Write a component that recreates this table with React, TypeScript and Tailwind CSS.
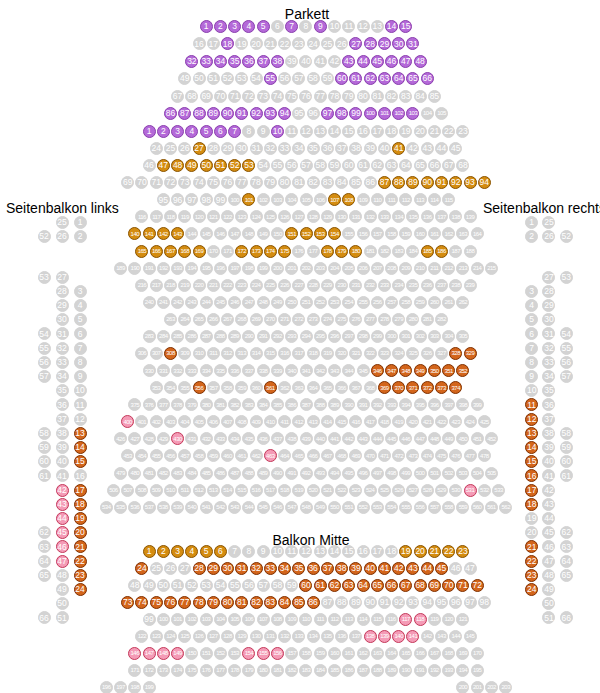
import clsx from 'clsx'

type Kind = 'free' | 'purple' | 'gold' | 'orange' | 'pink'

const seatColor: Record<Kind, string> = {
  free: 'bg-[#d3d3d3] border-[#d3d3d3]',
  purple: 'bg-[#b469d8] border-[#8a3fae]',
  gold: 'bg-[#d48c10] border-[#8a5400]',
  orange: 'bg-[#d3651b] border-[#803000]',
  pink: 'bg-[#f49bb6] border-[#c4395a]',
}

const range = (a: number, b: number) =>
  Array.from({ length: b - a + 1 }, (_, i) => a + i)

type Row = { from: number; count: number; kind?: Kind; taken?: number[] }

// Parkett, upper part (numbering 1–105)
const parkettTop: Row[] = [
  { from: 1, count: 15, kind: 'purple', taken: [1, 2, 3, 4, 5, 7, 9, 14, 15] },
  { from: 16, count: 16, kind: 'purple', taken: [18, ...range(27, 31)] },
  { from: 32, count: 17, kind: 'purple', taken: [...range(32, 38), ...range(43, 48)] },
  { from: 49, count: 18, kind: 'purple', taken: [55, ...range(60, 66)] },
  { from: 67, count: 19 },
  { from: 86, count: 20, kind: 'purple', taken: [...range(86, 94), ...range(97, 103)] },
]

// Parkett, lower part (numbering restarts at 1)
const parkett: Row[] = [
  { from: 1, count: 23, kind: 'purple', taken: [...range(1, 7), 10] },
  { from: 24, count: 22, kind: 'gold', taken: [27, 41] },
  { from: 46, count: 23, kind: 'gold', taken: range(47, 53) },
  { from: 69, count: 26, kind: 'gold', taken: range(87, 94) },
  { from: 95, count: 21, kind: 'gold', taken: [101, 107, 108] },
  { from: 116, count: 24 },
  { from: 140, count: 25, kind: 'gold', taken: [...range(140, 143), ...range(151, 154)] },
  {
    from: 165, count: 24, kind: 'gold',
    taken: [...range(165, 169), ...range(172, 175), ...range(178, 180), 185, 186],
  },
  { from: 189, count: 27 },
  { from: 216, count: 24 },
  { from: 240, count: 23 },
  { from: 263, count: 20 },
  { from: 283, count: 23 },
  { from: 306, count: 24, kind: 'orange', taken: [308, 328, 329] },
  { from: 330, count: 23, kind: 'orange', taken: range(346, 352) },
  { from: 353, count: 22, kind: 'orange', taken: [356, 361, ...range(369, 374)] },
  { from: 375, count: 25 },
  { from: 400, count: 26, kind: 'pink', taken: [400] },
  { from: 426, count: 27, kind: 'pink', taken: [430] },
  { from: 453, count: 26, kind: 'pink', taken: [463] },
  { from: 479, count: 27 },
  { from: 506, count: 28, kind: 'pink', taken: [531] },
  { from: 534, count: 29 },
]

const balkonMitte: Row[] = [
  { from: 1, count: 23, kind: 'gold', taken: [...range(1, 6), ...range(19, 23)] },
  { from: 24, count: 24, kind: 'orange', taken: [24, ...range(28, 45)] },
  { from: 48, count: 25, kind: 'orange', taken: range(60, 72) },
  { from: 73, count: 26, kind: 'orange', taken: range(73, 86) },
  { from: 99, count: 23, kind: 'pink', taken: [117, 118] },
  { from: 122, count: 24, kind: 'pink', taken: range(138, 141) },
  { from: 146, count: 25, kind: 'pink', taken: [...range(146, 149), ...range(154, 156)] },
  { from: 171, count: 25 },
]

// side balconies: [outer, middle, inner], 0 = no seat, suffix o / p = booked
type Cell = number | string
type SideRow = [Cell, Cell, Cell]

const sideTop: SideRow[] = [
  [0, 25, 1],
  [52, 26, 2],
]
const leftRows: SideRow[] = [
  [53, 27, 0],
  [0, 28, 3],
  [0, 29, 4],
  [0, 30, 5],
  [54, 31, 6],
  [55, 32, 7],
  [56, 33, 8],
  [57, 34, 9],
  [0, 35, 10],
  [0, 36, 11],
  [0, 37, 12],
  [58, 38, '13o'],
  [59, 39, '14o'],
  [60, 40, '15o'],
  [61, 41, 16],
  [0, '42p', '17o'],
  [0, '43p', '18o'],
  [0, '44p', '19o'],
  [62, '45p', '20o'],
  [63, '46p', '21o'],
  [64, '47p', '22o'],
  [65, 48, '23o'],
  [0, 49, '24o'],
  [0, 50, 0],
  [66, 51, 0],
]

const rightRows: SideRow[] = [
  [53, 27, 0],
  [0, 28, 3],
  [0, 29, 4],
  [0, 30, 5],
  [54, 31, 6],
  [55, 32, 7],
  [56, 33, 8],
  [57, 34, 9],
  [0, 35, 10],
  [0, 36, '11o'],
  [0, 37, '12o'],
  [58, 38, '13o'],
  [59, 39, '14o'],
  [60, 40, '15o'],
  [61, 41, '16o'],
  [0, 42, '17o'],
  [0, 43, '18o'],
  [0, 44, 19],
  [62, 45, 20],
  [63, 46, '21o'],
  [64, 47, '22o'],
  [65, 48, '23o'],
  [0, 49, '24o'],
  [0, 50, 0],
  [66, 51, 0],
]

const Seat = ({ num, kind }: { num: number; kind: Kind }) => (
  <div
    className={clsx(
      'flex h-[13px] w-[13px] shrink-0 items-center justify-center rounded-full border text-white leading-none',
      seatColor[kind],
      num > 99 ? 'text-[6px] tracking-[-0.5px]' : 'text-[8.5px]'
    )}
  >
    {num}
  </div>
)

const seatsOf = (row: Row) =>
  range(row.from, row.from + row.count - 1).map((n) => (
    <Seat key={n} num={n} kind={row.taken?.includes(n) ? row.kind ?? 'free' : 'free'} />
  ))

const SeatRows = ({ rows, className }: { rows: Row[]; className: string }) => (
  <div className={clsx('flex flex-col items-center', className)}>
    {rows.map((row) => (
      <div key={row.from} className="flex gap-[1.27px]">
        {seatsOf(row)}
      </div>
    ))}
  </div>
)

const SideCell = ({ cell }: { cell: Cell }) => {
  if (!cell) return <div className="h-[13px] w-[13px]" />
  const text = String(cell)
  const kind: Kind = text.endsWith('o') ? 'orange' : text.endsWith('p') ? 'pink' : 'free'
  return <Seat num={parseInt(text, 10)} kind={kind} />
}

const SideSeats = ({
  rows,
  mirrored,
  gap,
}: {
  rows: SideRow[]
  mirrored?: boolean
  gap: string
}) => {
  const line = (r: SideRow, i: number) => (
    <div key={i} className={clsx('flex', gap)}>
      {(mirrored ? [...r].reverse() : r).map((c, j) => (
        <SideCell key={j} cell={c} />
      ))}
    </div>
  )
  return (
    <div className="flex flex-col">
      <div className="flex flex-col gap-[1px]">{sideTop.map(line)}</div>
      <div className="mt-[27.5px] flex flex-col gap-[1.21px]">{rows.map(line)}</div>
    </div>
  )
}

const Title = ({ children, className }: { children: string; className?: string }) => (
  <div className={clsx('whitespace-nowrap text-[14px] leading-[10px] text-black', className)}>
    {children}
  </div>
)

export default function App() {
  return (
    <div className="flex h-[693px] w-[600px] overflow-hidden bg-white font-['Liberation_Sans',Arial,sans-serif]">
      {/* Seitenbalkon links */}
      <div className="flex w-[106px] shrink-0 flex-col pt-[203px]">
        <Title className="pl-[6px] text-[14.5px]">Seitenbalkon links</Title>
        <div className="pl-[37.5px] pt-[3px]">
          <SideSeats rows={leftRows} gap="gap-[5px]" />
        </div>
      </div>

      {/* Parkett + Balkon Mitte */}
      <div className="flex w-[400px] shrink-0 flex-col items-center pt-[8.5px]">
        <Title className="pl-[2px]">Parkett</Title>
        <SeatRows rows={parkettTop} className="mt-[1.5px] gap-[4.4px]" />
        <SeatRows rows={parkett} className="mt-[5px] gap-[4.09px]" />
        <Title className="mt-[21px] pl-[10px]">Balkon Mitte</Title>
        <SeatRows rows={balkonMitte} className="gap-[4px]" />
        <div className="mt-[4px] flex w-[412.5px] justify-between">
          <div className="flex gap-[1.27px]">{seatsOf({ from: 196, count: 4 })}</div>
          <div className="flex gap-[1.27px]">{seatsOf({ from: 200, count: 4 })}</div>
        </div>
      </div>

      {/* Seitenbalkon rechts */}
      <div className="flex w-[94px] shrink-0 flex-col pt-[203px]">
        <Title className="-ml-[23px] text-[14.5px]">Seitenbalkon rechts</Title>
        <div className="pl-[19.2px] pt-[3px]">
          <SideSeats rows={rightRows} mirrored gap="gap-[4.3px]" />
        </div>
      </div>
    </div>
  )
}
